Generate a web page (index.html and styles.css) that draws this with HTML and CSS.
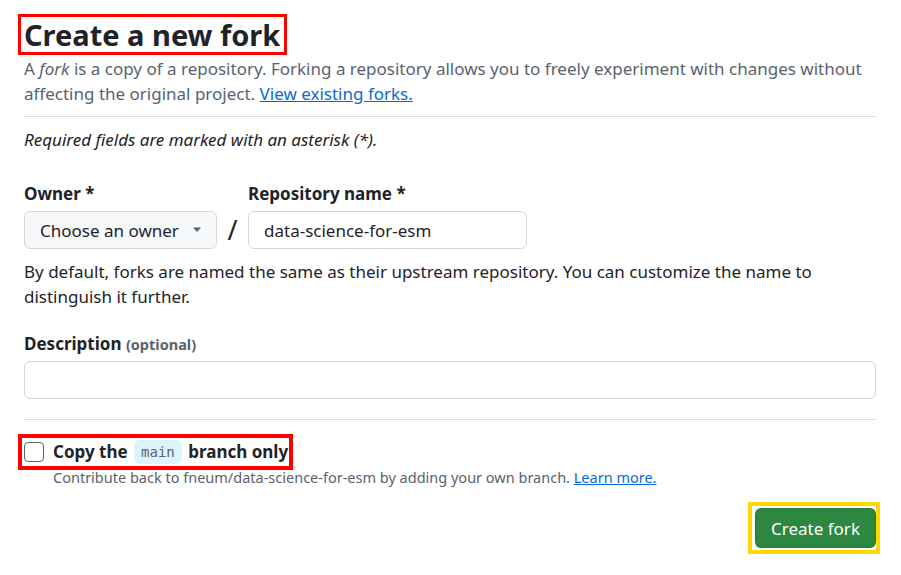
FILE: index.html
```html
<!DOCTYPE html>
<html>
<head>
<meta charset="utf-8">
<link rel="stylesheet" href="styles.css">
</head>
<body>
<div class="page">
  <h1 class="title">Create a new fork</h1>
  <p class="lead">A <em>fork</em> is a copy of a repository. Forking a repository allows you to freely experiment with changes without affecting the original project. <a href="#" class="link">View existing forks.</a></p>
  <hr class="sep sep-top">
  <p class="required">Required fields are marked with an asterisk (*).</p>

  <div class="owner-row">
    <div class="field">
      <label class="label">Owner *</label>
      <div class="select">
        <span>Choose an owner</span>
        <svg class="caret" width="10" height="6" viewBox="0 0 10 6"><path d="M1 0.5h8L5 5z" fill="#59636e"/></svg>
      </div>
    </div>
    <div class="slash">/</div>
    <div class="field">
      <label class="label">Repository name *</label>
      <div class="input repo">data-science-for-esm</div>
    </div>
  </div>
  <p class="help">By default, forks are named the same as their upstream repository. You can customize the name to distinguish it further.</p>

  <label class="label desc-label">Description <span class="optional">(optional)</span></label>
  <div class="input desc"></div>

  <hr class="sep sep-bottom">

  <div class="check-row">
    <span class="checkbox"></span>
    <span class="check-label">Copy the <code class="branch">main</code> branch only</span>
  </div>
  <p class="note">Contribute back to fneum/data-science-for-esm by adding your own branch. <a href="#" class="link">Learn more.</a></p>

  <div class="actions">
    <div class="btn-wrap"><button class="btn">Create fork</button></div>
  </div>
</div>
</body>
</html>
```

FILE: styles.css
```css
* { box-sizing: border-box; }
html, body { margin: 0; padding: 0; background: #fff; }
body {
  font-family: "Noto Sans", "Open Sans", sans-serif;
  color: #1f2328;
  font-size: 17px;
}
.page {
  width: 901px;
  padding: 14px 25px 0 24px;
}
.title {
  display: inline-block;
  margin: 0 0 0 -6px;
  padding: 0 4px 0 3px;
  border: 3px solid #f00;
  font-size: 29px;
  line-height: 35px;
  font-weight: 700;
  color: #1f2328;
}
.lead {
  margin: 1px 0 0 0;
  color: #59636e;
  line-height: 25px;
}
.link { color: #0969da; text-decoration: underline; }
.sep {
  border: 0;
  height: 1px;
  background: #d8dee4;
  margin: 0;
}
.sep-top { margin-top: 10px; }
.required {
  margin: 11px 0 0 0;
  font-style: italic;
  line-height: 24px;
}
.owner-row {
  display: flex;
  align-items: flex-end;
  margin-top: 27px;
}
.field { display: flex; flex-direction: column; }
.label {
  display: block;
  font-weight: 700;
  line-height: 24px;
}
.owner-row .label { line-height: 26px; padding-top: 2px; }
.owner-row .select, .owner-row .repo { margin-top: 4px; }
.select {
  margin-top: 6px;
  width: 193px;
  height: 38px;
  border: 1px solid #d1d9e0;
  border-radius: 6px;
  background: #f6f8fa;
  display: flex;
  align-items: center;
  justify-content: space-between;
  padding: 0 14px 0 15px;
}
.slash {
  width: 31px;
  height: 38px;
  display: flex;
  align-items: center;
  justify-content: center;
  font-size: 27px;
  font-weight: 400;
  line-height: 38px;
}
.input {
  border: 1px solid #d1d9e0;
  border-radius: 6px;
  background: #fff;
  height: 38px;
}
.repo {
  margin-top: 6px;
  width: 279px;
  display: flex;
  align-items: center;
  padding: 0 15px;
}
.help {
  margin: 10px 0 0 0;
  line-height: 25px;
}
.desc-label { margin-top: 23px; }
.optional {
  font-size: 14.5px;
  color: #59636e;
  font-weight: 700;
}
.desc {
  margin-top: 5px;
  width: 852px;
}
.sep-bottom { margin-top: 20px; }
.check-row {
  display: inline-flex;
  align-items: center;
  margin: 14px 0 0 -6px;
  border: 4px solid #f00;
  padding: 0 1px 0 2px;
  height: 36px;
}
.checkbox {
  width: 20px;
  height: 20px;
  border: 1px solid #59636e;
  border-radius: 4px;
  background: #fff;
  margin-right: 9px;
}
.check-label {
  font-weight: 700;
  line-height: 24px;
}
.branch {
  display: inline-block;
  font-family: "DejaVu Sans Mono", "Liberation Mono", monospace;
  font-weight: 400;
  font-size: 14px;
  line-height: 24px;
  color: #59636e;
  background: #ddf4ff;
  border-radius: 6px;
  padding: 0 7px;
  margin: 0 2px;
  vertical-align: top;
}
.note {
  margin: -3px 0 0 29px;
  font-size: 14.5px;
  line-height: 21px;
  color: #59636e;
}
.actions {
  display: flex;
  justify-content: flex-end;
  margin-top: 14px;
}
.btn-wrap {
  border: 4px solid #ffd800;
  padding: 2px 0 2px 3px;
  margin-right: -4px;
}
.btn {
  display: block;
  width: 121px;
  height: 40px;
  background: #2c8840;
  color: #fff;
  border: 1px solid rgba(31,35,40,0.15);
  border-radius: 6px;
  font-family: "Noto Sans", "Open Sans", sans-serif;
  font-size: 17px;
  font-weight: 400;
}
```
